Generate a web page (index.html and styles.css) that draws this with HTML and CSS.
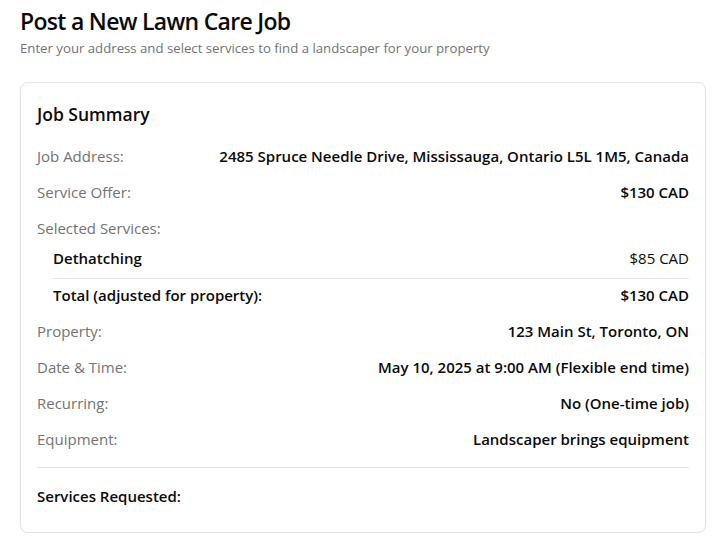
FILE: index.html
```html
<!DOCTYPE html>
<html lang="en">
<head>
<meta charset="utf-8">
<title>Post a New Lawn Care Job</title>
<link rel="stylesheet" href="styles.css">
</head>
<body>
<main class="page">
  <header class="page-head">
    <h1 class="title">Post a New Lawn Care Job</h1>
    <p class="subtitle">Enter your address and select services to find a landscaper for your property</p>
  </header>
  <section class="card">
    <h2 class="card-title">Job Summary</h2>
    <div class="row"><span class="label">Job Address:</span><span class="value">2485 Spruce Needle Drive, Mississauga, Ontario L5L 1M5, Canada</span></div>
    <div class="row"><span class="label">Service Offer:</span><span class="value">$130 CAD</span></div>
    <div class="row row-tight"><span class="label">Selected Services:</span></div>
    <div class="services">
      <div class="service-item"><span class="service-name">Dethatching</span><span class="service-price">$85 CAD</span></div>
      <div class="service-total"><span class="service-name">Total (adjusted for property):</span><span class="value">$130 CAD</span></div>
    </div>
    <div class="row"><span class="label">Property:</span><span class="value">123 Main St, Toronto, ON</span></div>
    <div class="row"><span class="label">Date &amp; Time:</span><span class="value">May 10, 2025 at 9:00 AM (Flexible end time)</span></div>
    <div class="row"><span class="label">Recurring:</span><span class="value">No (One-time job)</span></div>
    <div class="row"><span class="label">Equipment:</span><span class="value">Landscaper brings equipment</span></div>
    <div class="requested">
      <h3 class="requested-title">Services Requested:</h3>
    </div>
  </section>
</main>
</body>
</html>
```

FILE: styles.css
```css
* { box-sizing: border-box; }
html, body { margin: 0; padding: 0; background: #ffffff; }
body {
  font-family: "Open Sans", "Noto Sans", sans-serif;
  color: #111111;
}
.page {
  padding: 5px 17px 0 20px;
}
.title {
  margin: 0;
  font-size: 23px;
  line-height: 32px;
  font-weight: 600;
  color: #0a0a0a;
  letter-spacing: -0.7px;
}
.subtitle {
  margin: 2px 0 0;
  font-size: 13.2px;
  line-height: 18px;
  color: #737373;
}
.card {
  margin-top: 25px;
  border: 1px solid #e3e3e3;
  border-radius: 8px;
  padding: 19px 16px 26px;
  box-shadow: 0 1px 2px rgba(0,0,0,0.04);
}
.card-title {
  margin: 0 0 12px;
  font-size: 17.5px;
  line-height: 24px;
  font-weight: 600;
  color: #0a0a0a;
}
.row {
  display: flex;
  justify-content: space-between;
  align-items: center;
  padding: 8px 0;
  font-size: 15px;
  line-height: 20px;
}
.row-tight { padding-bottom: 7px; }
.label { color: #737373; }
.value { font-weight: 600; color: #0a0a0a; text-align: right; }
.services {
  margin-left: 16px;
  font-size: 15px;
  line-height: 20px;
}
.service-item {
  display: flex;
  justify-content: space-between;
  padding: 3px 0 10px;
  border-bottom: 1px solid #e5e5e5;
}
.service-name { font-weight: 600; color: #0a0a0a; }
.service-price { color: #0a0a0a; }
.service-total {
  display: flex;
  justify-content: space-between;
  padding: 6px 0 8px;
}
.requested {
  margin-top: 10px;
  border-top: 1px solid #e5e5e5;
  padding-top: 18px;
}
.requested-title {
  margin: 0;
  font-size: 15px;
  line-height: 20px;
  font-weight: 600;
  color: #0a0a0a;
}
```
